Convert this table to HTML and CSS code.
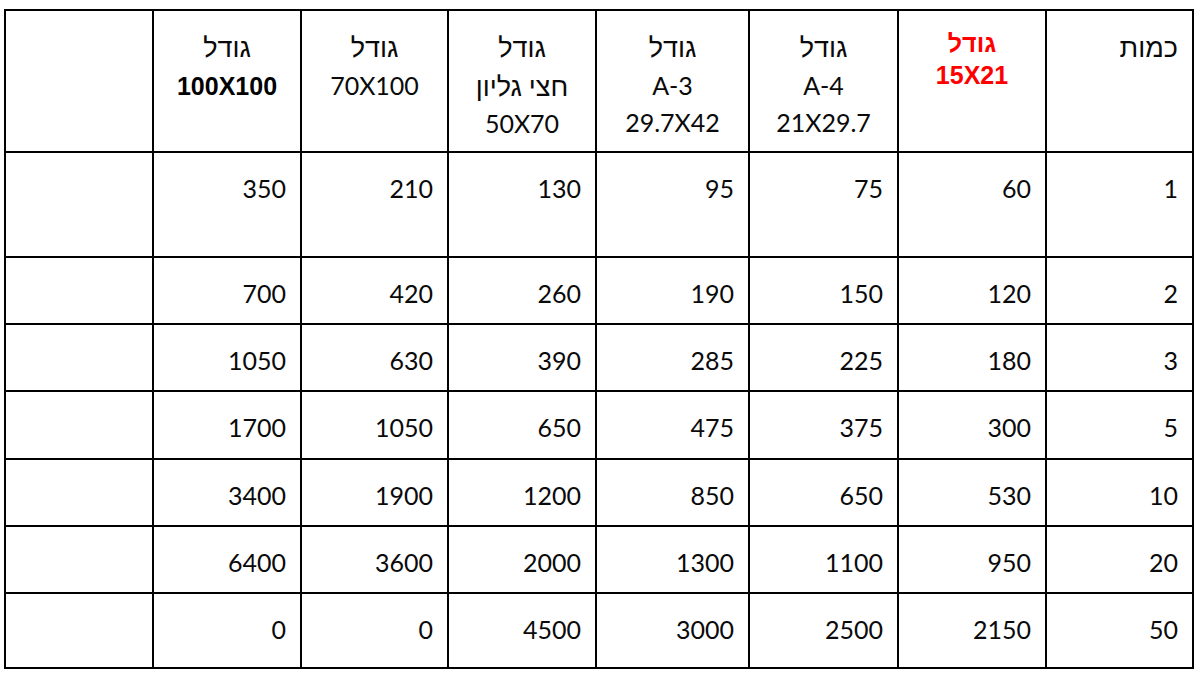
FILE: index.html
```html
<!DOCTYPE html>
<html lang="he" dir="rtl">
<head>
<meta charset="utf-8">
<title>מחירון</title>
<link rel="stylesheet" href="styles.css">
</head>
<body>
<table class="prices">
  <colgroup>
    <col class="c-qty">
    <col class="c-1">
    <col class="c-2">
    <col class="c-3">
    <col class="c-4">
    <col class="c-5">
    <col class="c-6">
    <col class="c-7">
  </colgroup>
  <tr class="head">
    <td><span class="he">כמות</span></td>
    <td class="hot"><b>גודל<br>15X21</b></td>
    <td class="center"><span class="he">גודל</span><br>A-4<br>21X29.7</td>
    <td class="center"><span class="he">גודל</span><br>A-3<br>29.7X42</td>
    <td class="center"><span class="he">גודל</span><br><span class="he">חצי גליון</span><br>50X70</td>
    <td class="center"><span class="he">גודל</span><br>70X100</td>
    <td class="center"><span class="he">גודל</span><br><b class="strong">100X100</b></td>
    <td></td>
  </tr>
  <tr class="r-first"><td>1</td><td>60</td><td>75</td><td>95</td><td>130</td><td>210</td><td>350</td><td></td></tr>
  <tr class="r"><td>2</td><td>120</td><td>150</td><td>190</td><td>260</td><td>420</td><td>700</td><td></td></tr>
  <tr class="r"><td>3</td><td>180</td><td>225</td><td>285</td><td>390</td><td>630</td><td>1050</td><td></td></tr>
  <tr class="r"><td>5</td><td>300</td><td>375</td><td>475</td><td>650</td><td>1050</td><td>1700</td><td></td></tr>
  <tr class="r"><td>10</td><td>530</td><td>650</td><td>850</td><td>1200</td><td>1900</td><td>3400</td><td></td></tr>
  <tr class="r"><td>20</td><td>950</td><td>1100</td><td>1300</td><td>2000</td><td>3600</td><td>6400</td><td></td></tr>
  <tr class="r-last"><td>50</td><td>2150</td><td>2500</td><td>3000</td><td>4500</td><td>0</td><td>0</td><td></td></tr>
</table>
</body>
</html>
```
FILE: styles.css
```css
html, body {
  margin: 0;
  padding: 0;
  background: #ffffff;
}

body {
  padding: 9px 6px 0 4px;
}

.prices {
  border-collapse: collapse;
  table-layout: fixed;
  width: 1190px;
  font-family: Lato, "Liberation Sans", "DejaVu Sans", sans-serif;
  font-size: 25px;
  line-height: 37.5px;
  color: #0a0a0a;
}

.c-qty { width: 147px; }
.c-1 { width: 148px; }
.c-2 { width: 149px; }
.c-3 { width: 153px; }
.c-4 { width: 148px; }
.c-5 { width: 147px; }
.c-6 { width: 148px; }
.c-7 { width: 148px; }

.prices td {
  border: 2px solid #000000;
  vertical-align: top;
  text-align: right;
  padding: 17px 14px 0 14px;
  box-sizing: border-box;
}

.prices .center {
  text-align: center;
}

.he {
  font-size: 27px;
}

.head { height: 142px; }
.r-first { height: 105px; }
.r { height: 67.2px; }
.r-last { height: 75px; }

.prices td.hot {
  text-align: center;
  color: #ff0000;
  font-family: "Liberation Sans", Arial, sans-serif;
  font-size: 25px;
  line-height: 32px;
  padding-top: 16px;
}

.strong {
  font-family: "Liberation Sans", Arial, sans-serif;
  font-weight: 700;
  color: #000000;
}
```
